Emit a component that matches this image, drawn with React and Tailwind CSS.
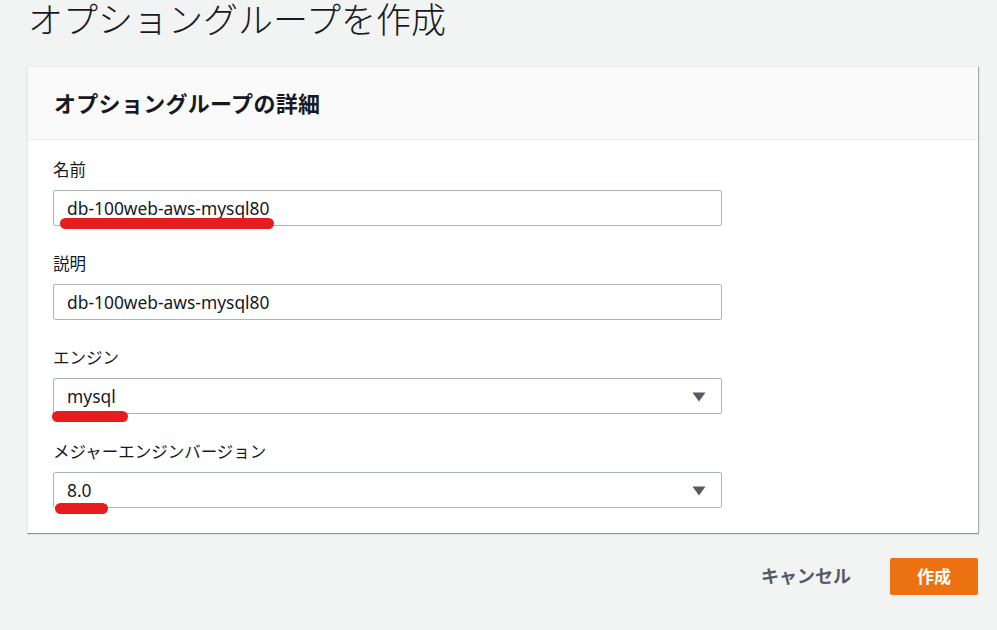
import React from "react";

const jp = "font-['Noto_Sans','Noto_Sans_CJK_JP',sans-serif]";

function Field({ label, value, select, mark }) {
    return (
        <div className="flex flex-col">
            <div className="text-[16.5px] leading-[24px] text-[#16191f] mb-2">{label}</div>
            <div className="relative w-[669px] h-[36px] border border-[#aab7b8] rounded-[2px] bg-white flex items-center pl-[13px] pr-[15px]">
                <span className="text-[17.4px] text-[#16191f] flex-1">{value}</span>
                {select && (
                    <svg width="14" height="10" viewBox="0 0 14 10" className="mt-[1px]">
                        <path d="M0.5 0.5 H13.5 L7 9.5 Z" fill="#545b64" />
                    </svg>
                )}
                {mark}
            </div>
        </div>
    );
}

export default function App() {
    return (
        <div className={`min-h-[630px] bg-[#f2f3f3] px-[27px] ${jp} text-[#16191f]`}>
            <h1 className="text-[35px] leading-[40px] font-light pl-[1px]">オプショングループを作成</h1>

            <div className="mt-[26px] w-[951px] bg-white border-t border-l border-[#eaeded] shadow-[1px_1px_1px_0_rgba(0,28,36,0.3),0_1px_1px_0_rgba(0,28,36,0.2)]">
                <div className="h-[73px] bg-[#fafafa] border-b border-[#eaeded] flex items-center px-[26px]">
                    <h2 className="text-[22px] font-bold tracking-[0.3px]">オプショングループの詳細</h2>
                </div>
                <div className="px-[25px] pt-[18px] pb-[25px] flex flex-col gap-[26px]">
                    <Field
                        label="名前"
                        value="db-100web-aws-mysql80"
                        mark={<div className="absolute left-[6px] top-[27px] w-[214px] h-[11px] rounded-full bg-[#e61c1f]" />}
                    />
                    <Field label="説明" value="db-100web-aws-mysql80" />
                    <Field
                        label="エンジン"
                        value="mysql"
                        select
                        mark={<div className="absolute left-[-2px] top-[32px] w-[76px] h-[11px] rounded-full bg-[#e61c1f]" />}
                    />
                    <Field
                        label="メジャーエンジンバージョン"
                        value="8.0"
                        select
                        mark={<div className="absolute left-[1px] top-[30px] w-[53px] h-[11px] rounded-full bg-[#e61c1f]" />}
                    />
                </div>
            </div>

            <div className="w-[951px] flex justify-end items-center mt-[25px]">
                <button className="text-[18px] font-bold text-[#545b64] px-[20px] h-[37px] mr-[19px]">キャンセル</button>
                <button className="w-[88px] h-[37px] rounded-[2px] bg-[#ec7211] text-white text-[17px] font-bold">作成</button>
            </div>
        </div>
    );
}
